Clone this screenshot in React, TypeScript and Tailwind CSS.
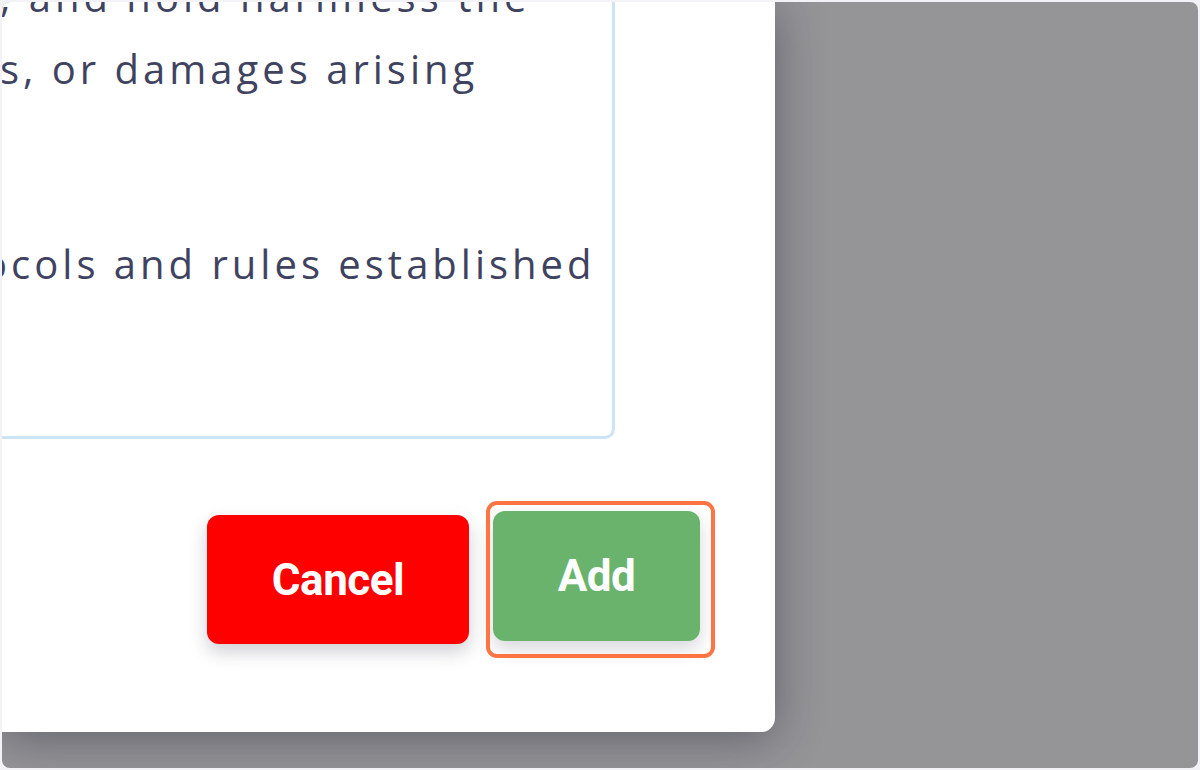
import React from "react";

const textFont = { fontFamily: '"Open Sans", "Noto Sans", sans-serif' };

export default function App() {
  return (
    <div className="h-[770px] w-[1200px] bg-[#f3f3f7] p-[2px]">
      <div className="relative flex h-full w-full items-start overflow-hidden rounded-[8px] bg-[#959598]">
        <div className="relative flex h-[730px] w-[773px] shrink-0 flex-col rounded-br-[14px] bg-white shadow-[0_6px_48px_rgba(30,30,50,0.45)]">
          <div
            className="-ml-[100px] -mt-[44px] h-[481px] w-[713px] rounded-[10px] border-[3px] border-[#cfe3f6] pl-[95px] text-[40px] leading-[72px] tracking-[4px] text-[#40435f]"
            style={textFont}
          >
            <div className="whitespace-nowrap">, and hold harmless the</div>
            <div className="whitespace-nowrap">s, or damages arising</div>
            <div className="h-[123px]" />
            <div className="-ml-[17px] whitespace-nowrap">ocols and rules established</div>
          </div>

          <div className="mt-[72px] flex items-start justify-end gap-[24px] pr-[75px]">
            <button className="mt-[4px] h-[129px] w-[262px] rounded-[12px] bg-[#ff0000] text-[44px] font-bold text-white shadow-[0_8px_18px_rgba(40,40,70,0.22)] font-['Roboto',sans-serif] tracking-[-0.5px]">
              Cancel
            </button>
            <div className="relative">
              <button className="h-[130px] w-[207px] rounded-[12px] bg-[#69b36c] text-[44px] font-bold text-white shadow-[0_8px_18px_rgba(40,40,70,0.18)] font-['Roboto',sans-serif] tracking-[-0.5px]">
                Add
              </button>
              <div className="pointer-events-none absolute -left-[7px] -top-[10px] h-[157px] w-[229px] rounded-[11px] border-[4px] border-[#ff7443]" />
            </div>
          </div>
        </div>
      </div>
    </div>
  );
}
